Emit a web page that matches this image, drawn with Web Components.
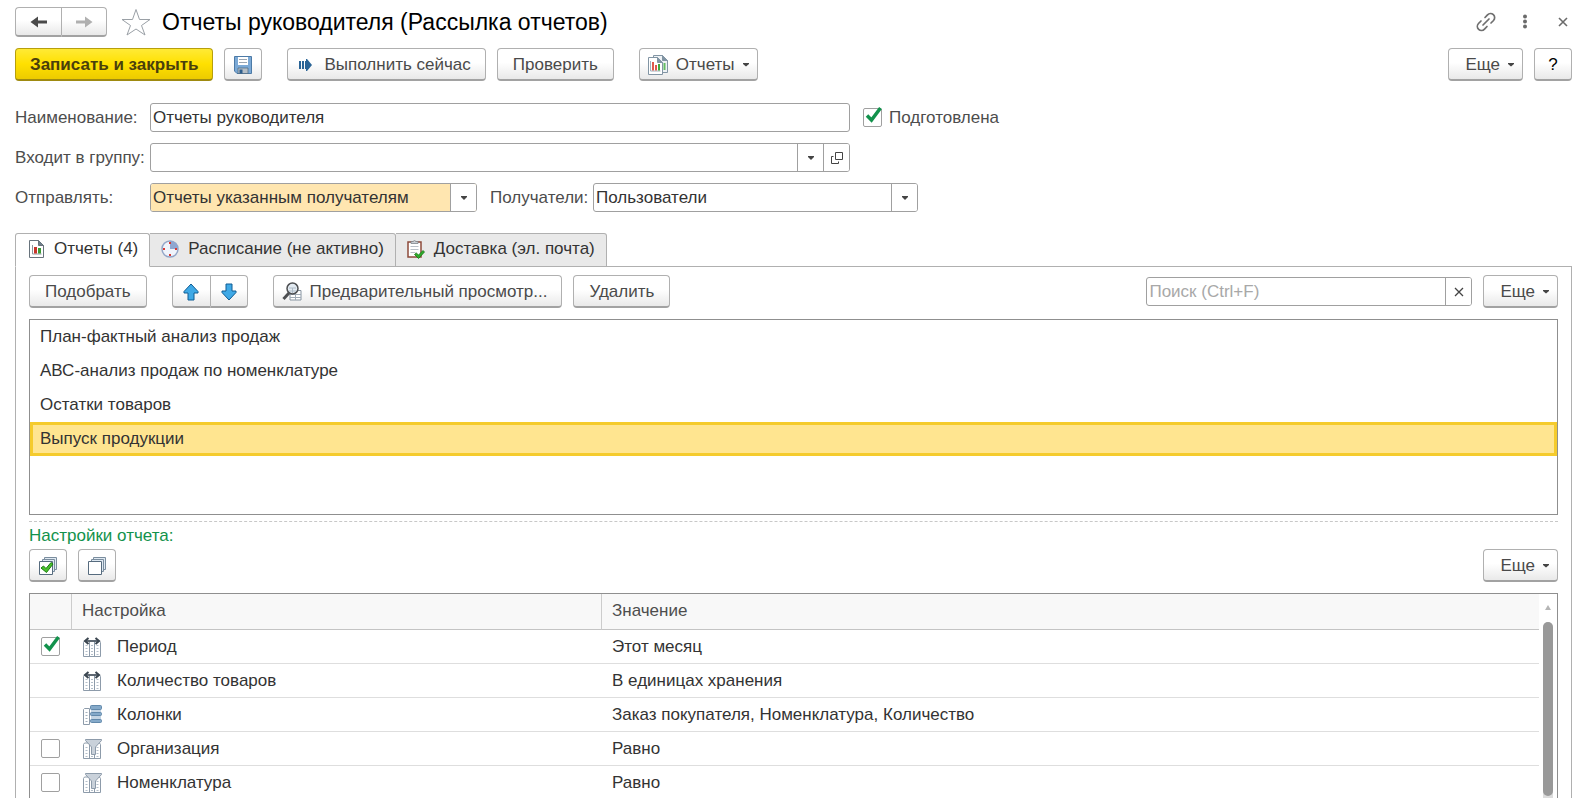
<!DOCTYPE html>
<html lang="ru">
<head>
  <meta charset="utf-8">
  <meta name="viewport" content="width=device-width, initial-scale=1">
  <title>Отчеты руководителя (Рассылка отчетов)</title>
  <style>
    :root {
      --text: #333333;
      --label: #4d4d4d;
      --line: #a0a0a0;
      --green: #12924c;
    }

    body {
      margin: 0;
      height: 100vh;
      overflow: hidden;
      background: #ffffff;
      color: var(--text);
      font: 17px/20px "Liberation Sans", Arial, sans-serif;
    }
  </style>
</head>
<body>
  <mailing-page></mailing-page>

  <script>
    const grid = `
      <path d="M.5 19.500v-14l1-1.500h15l1 1.500v14z" fill="#fff" stroke="#8d9baa"/>
      <path d="M6.500 4.500v15M11.500 4.500v15" stroke="#8d9baa"/>
      <path d="M3.500 8v10M9 8v10M14.500 8v10" stroke="#b3bec9" stroke-width="2" stroke-dasharray="1 2"/>`

    const stack = `
      <path d="M5.500 4.500v-4h12v12h-3" fill="#dfe9f2" stroke="#7a8d9e"/>
      <path d="M3.500 5.500v-3h12v12h-3" fill="#dfe9f2" stroke="#7a8d9e"/>
      <path d="M.5 4.500h13v13h-13z" fill="#fff" stroke="#566b7e"/>`

    // [width, height, markup]
    const ICONS = {
      back: [18, 12, `<path d="M.5 6L8 .5v4h9v3H8v4z" fill="#4a4a4a"/>`],
      forward: [18, 12, `<path d="M17.500 6L10 .5v4H1v3h9v4z" fill="#b0b0b0"/>`],
      star: [30, 28, `<path d="M15 1.500l3.500 10H29l-8.500 6 3.500 9.500-9-6-9 6 3.500-9.500L1 11.500h10.500z" fill="#fff" stroke="#9aa0a6"/>`],
      link: [20, 20, `<g fill="none" stroke="#6f6f6f" stroke-width="1.700" stroke-linecap="round"><path d="M7 13l6-6"/><path d="M9 5.500l2.500-2.700a4 4 0 0 1 6 5.700L15 11"/><path d="M5 9L2.500 11.500a4 4 0 0 0 6 5.700L11 14.500"/></g>`],
      dots: [14, 16, `<g fill="#6b6b6b"><circle cx="5" cy="2.500" r="2"/><circle cx="5" cy="7.500" r="2"/><circle cx="5" cy="12.500" r="2"/></g>`],
      close: [10, 10, `<path d="M1 1l8 8M9 1L1 9" fill="none" stroke="#6b6b6b" stroke-width="1.600"/>`],
      clear: [10, 10, `<path d="M1 1l8 8M9 1L1 9" fill="none" stroke="#444" stroke-width="1.300"/>`],
      caret: [6, 4, `<path d="M0 0h6v1L3 3.500 0 1z" fill="#444"/>`],
      drop: [8, 4, `<path d="M1 0h6v1L4 4 1 1z" fill="#444"/>`],
      open: [14, 14, `<path d="M5.500 1.500h7v7h-7z M3.500 5.500h-2v7h7v-2" fill="none" stroke="#444"/>`],
      save: [18, 18, `
        <path d="M.5.5h17v17H3L.5 15z" fill="#7ba9d6" stroke="#4c7aa6"/>
        <path d="M4 1h10v8H4z" fill="#fff"/>
        <path d="M5 3.500h8M5 6.500h8" stroke="#9ba6b2"/>
        <path d="M4 12h10v5.500H4z" fill="#b5bec6" stroke="#49677f" stroke-width=".7"/>
        <path d="M5.500 13.500h3v4h-3z" fill="#2f5f8d"/>`],
      run: [20, 12, `<path d="M3 2h2v8H3z M6 2h2v8H6z M9 2h1V0h1l5 6-5 6h-1v-2H9z" fill="#2a6496"/>`],
      reports: [20, 20, `
        <path d="M5.500.5h9l5 5v12h-14z" fill="#eef2f5" stroke="#8295a4"/>
        <path d="M14.500.5v5h5z" fill="#8194a3" stroke="#8295a4"/>
        <path d="M16.500 8v7" stroke="#63bd62" stroke-width="2"/>
        <path d="M.5 2.500h9l5 5v12H.5z" fill="#fff" stroke="#8295a4"/>
        <path d="M9.500 2.500v5h5z" fill="#8194a3" stroke="#8295a4"/>
        <path d="M2.500 6v10h10" fill="none" stroke="#a3b2be"/>
        <path d="M4 7h2v8.500H4z" fill="#df5a4f"/><path d="M7 10h2v5.500H7z" fill="#df5a4f"/><path d="M10 9h2v6.500h-2z" fill="#41a83f"/>`],
      up: [16, 18, `<path d="M8 1L1 8.500V10h4v7h6v-7h4V8.500z" fill="#3fa9e6" stroke="#0e5c94" stroke-linejoin="round"/>`],
      down: [16, 18, `<path d="M8 17L1 9.500V8h4V1h6v7h4v1.500z" fill="#3fa9e6" stroke="#0e5c94" stroke-linejoin="round"/>`],
      preview: [20, 19, `
        <path d="M8 8.500h11v9.500H8z" fill="#fff" stroke="#8693a0"/>
        <path d="M8 12.500h11M8 15.500h11M13.500 9v9" stroke="#a0abb6"/>
        <path d="M7 11L1.500 17" stroke="#4d4f52" stroke-width="3"/>
        <circle cx="10.500" cy="6.500" r="5.500" fill="#e3ebf2" stroke="#4d4f52" stroke-width="1.500"/>
        <path d="M7 6h7M7 9h7M10.500 6v5" stroke="#aebbc7"/>`],
      chart: [15, 18, `
        <path d="M.5.5h9l5 5v12H.5z" fill="#fff" stroke="#68737c"/>
        <path d="M9.500.5v5h5z" fill="#6f7f8c" stroke="#68737c"/>
        <path d="M3.500 5v9h9" fill="none" stroke="#8d969d"/>
        <path d="M5 7h3v6.500H5z" fill="#c8352a"/><path d="M9 8h3v5.500H9z" fill="#3c9a35"/>`],
      clock: [18, 18, `
        <circle cx="9" cy="9" r="8" fill="#f0f4fb" stroke="#93a6c8" stroke-width="1.500"/>
        <path d="M9 9V1a8 8 0 0 1 8 8z" fill="#8fa6d0"/>
        <path d="M9 2v2M9 14v2M2 9h2M14 9h2" stroke="#d83a35" stroke-width="2"/>`],
      clipboard: [18, 19, `
        <path d="M1 2h13v15H1z" fill="#fff" stroke="#8d4b3b" stroke-width="1.500"/>
        <path d="M4 3.500V1.500h2L7.500.5l1.500 1h2v2z" fill="#c9ced3" stroke="#7d858c" stroke-width=".8"/>
        <path d="M3.500 6.500h8M3.500 9.500h8M3.500 12.500h5" stroke="#b9c0c7"/>
        <path d="M7.500 14.500L9.300 13l2.200 2 4.500-4.500 1.500 1.500-6 6.500z" fill="#2fae2c" stroke="#157514" stroke-width=".8"/>`],
      checkAll: [18, 18, stack + `<path d="M2 11l2.500-2 2.500 2.500 5-6 2 1.500-6.500 8.500z" fill="#49c02c" stroke="#1b7d12"/>`],
      uncheckAll: [18, 18, stack],
      parameter: [18, 20, grid + `<path d="M2.500 4h13" stroke="#3b4650" stroke-width="1.500"/><path d="M5.500 1L2 4l3.500 3M12.500 1L16 4l-3.500 3" fill="none" stroke="#3b4650" stroke-width="2"/>`],
      columns: [19, 20, `
        <path d="M.5 19.500v-15l1-1h5v16z" fill="#fff" stroke="#8d9baa"/>
        <path d="M3.500 7v11" stroke="#a3b0bd" stroke-width="2" stroke-dasharray="1 2"/>
        <path d="M8 4h10v13H8z" fill="#c3d4e3"/>
        <rect x="7.500" y=".5" width="11" height="4" rx="1" fill="#84a9c9" stroke="#6289ab"/>
        <rect x="7.500" y="7.500" width="11" height="3" rx="1" fill="#84a9c9" stroke="#6289ab"/>
        <rect x="7.500" y="14.500" width="11" height="3" rx="1" fill="#84a9c9" stroke="#6289ab"/>`],
      filter: [19, 20, grid + `<path d="M2.500.5h16v1L12.500 8v7.500h-4V8L2.500 1.500z" fill="#c9d1da" stroke="#8d9baa"/>`]
    }

    class UiIcon extends HTMLElement {
      connectedCallback() {
        if (this.shadowRoot) return

        const [width, height, markup] = ICONS[this.getAttribute('name')]

        this.attachShadow({ mode: 'open' })
        this.shadowRoot.innerHTML = `
          <style>
            :host { display: inline-flex; flex: none; justify-content: center; }
            svg { display: block; overflow: visible; }
          </style>
          <svg width="${width}" height="${height}" viewBox="0 0 ${width} ${height}" aria-hidden="true">${markup}</svg>
        `
      }
    }

    class UiButton extends HTMLElement {
      constructor() {
        super()

        this.attachShadow({ mode: 'open' })
        this.shadowRoot.innerHTML = `
          <style>
            :host {
              display: inline-flex;
              flex: none;
            }

            button {
              display: flex;
              align-items: center;
              justify-content: center;
              gap: 8px;
              box-sizing: border-box;
              width: 100%;
              height: 33px;
              padding: 1px 15px 0;
              border: 1px solid #b0b0b0;
              border-bottom: 2px solid #a2a2a2;
              border-radius: 4px;
              background: linear-gradient(#ffffff 45%, #e9e9e9);
              color: #4a4a4a;
              font: inherit;
              white-space: nowrap;
              cursor: pointer;
            }

            :host([primary]) button {
              padding: 1px 14px 0;
              border-color: #b79f0c;
              border-bottom-color: #9f8a10;
              background: linear-gradient(#ffea35, #ffe000 50%, #eccb00);
              color: #4a3f0c;
              font-weight: bold;
            }

            :host([square]) button {
              width: 38px;
              padding: 1px 0 0;
              color: #000000;
            }

            :host([menu]) button {
              padding-left: 16px;
              padding-right: 8px;
            }

            :host([icon]) button {
              padding-left: 8px;
            }

            :host([icon]:not([menu])) button {
              padding-right: 14px;
            }

            :host([nav]) button {
              width: 46px;
              height: 30px;
              padding: 0;
            }

            :host([start]) button {
              border-right: 0;
              border-radius: 4px 0 0 4px;
            }

            :host([end]) button {
              border-radius: 0 4px 4px 0;
            }
          </style>
          <button type="button"><slot></slot></button>
        `
      }

      connectedCallback() {
        const button = this.shadowRoot.querySelector('button')

        if (this.title) button.setAttribute('aria-label', this.title)

        if (this.hasAttribute('menu')) {
          button.setAttribute('aria-haspopup', 'menu')
          button.insertAdjacentHTML('beforeend', '<ui-icon name="caret"></ui-icon>')
        }
      }
    }

    /* Labelled box. Kinds: text, select, search */
    class UiField extends HTMLElement {
      connectedCallback() {
        if (this.shadowRoot) return

        const kind = this.getAttribute('kind') || 'text'
        const label = this.getAttribute('label')
        const value = this.getAttribute('value') || ''

        const control = {
          text: `<input id="control" type="text" value="${value}">`,
          select: `
            <span class="select">
              <select id="control"><option>${value}</option></select>
              <span class="cell arrow"><ui-icon name="drop"></ui-icon></span>
            </span>`,
          search: `
            <input id="control" type="text" placeholder="${label}" aria-label="${label}">
            <button class="cell" type="button" aria-label="Очистить"><ui-icon name="clear"></ui-icon></button>`
        }[kind]

        const open = this.hasAttribute('openable')
          ? '<button class="cell" type="button" aria-label="Открыть"><ui-icon name="open"></ui-icon></button>'
          : ''

        this.attachShadow({ mode: 'open' })
        this.shadowRoot.innerHTML = `
          <style>
            :host {
              display: flex;
              align-items: center;
              min-width: 0;
            }

            label {
              flex: none;
              width: var(--label-width, auto);
              color: var(--label);
              white-space: nowrap;
            }

            .box {
              display: flex;
              flex: 1;
              box-sizing: border-box;
              min-width: 0;
              height: 29px;
              overflow: hidden;
              border: 1px solid var(--line);
              border-radius: 3px;
              background: #ffffff;
            }

            input,
            select {
              flex: 1;
              min-width: 0;
              width: 100%;
              margin: 0;
              padding: 0 2px;
              border: 0;
              outline: none;
              appearance: none;
              background: none;
              color: var(--text);
              font: inherit;
            }

            input::placeholder {
              color: #a8a8a8;
            }

            .select {
              display: grid;
              flex: 1;
              grid-template-columns: 1fr 26px;
            }

            .select select {
              grid-area: 1 / 1 / 2 / 3;
              padding-right: 28px;
            }

            .arrow {
              grid-area: 1 / 2;
              pointer-events: none;
            }

            .cell {
              display: flex;
              align-items: center;
              justify-content: center;
              box-sizing: border-box;
              width: 26px;
              padding: 0;
              border: 0;
              border-left: 1px solid var(--line);
              background: #ffffff;
            }

            :host([highlight]) select {
              background: #ffe6b0;
            }
          </style>
          ${kind === 'search' ? '' : `<label for="control">${label}</label>`}
          <span class="box">${control}${open}</span>
        `
      }
    }

    class UiCheck extends HTMLElement {
      connectedCallback() {
        if (this.shadowRoot) return

        const label = this.getAttribute('label')
        const checked = this.hasAttribute('checked') ? 'checked' : ''

        this.attachShadow({ mode: 'open' })
        this.shadowRoot.innerHTML = `
          <style>
            :host {
              display: flex;
            }

            label {
              display: flex;
              align-items: center;
              gap: 7px;
              color: var(--label);
            }

            .mark {
              display: grid;
            }

            input,
            svg {
              grid-area: 1 / 1;
            }

            input {
              width: 19px;
              height: 19px;
              margin: 0;
              border: 1px solid var(--line);
              border-radius: 2px;
              appearance: none;
              background: #ffffff;
            }

            svg {
              overflow: visible;
              visibility: hidden;
              pointer-events: none;
            }

            input:checked + svg {
              visibility: visible;
            }
          </style>
          <label>
            <span class="mark">
              <input type="checkbox" ${checked} ${this.hasAttribute('bare') ? `aria-label="${label}"` : ''}>
              <svg width="19" height="19" viewBox="0 0 19 19" aria-hidden="true">
                <path d="M4 7.500L8.500 12 17.500 0" fill="none" stroke="#12924c" stroke-width="3.500"/>
              </svg>
            </span>
            ${this.hasAttribute('bare') ? '' : `<span>${label}</span>`}
          </label>
        `
      }
    }

    class PageHeader extends HTMLElement {
      constructor() {
        super()

        this.attachShadow({ mode: 'open' })
        this.shadowRoot.innerHTML = `
          <style>
            :host {
              display: flex;
              align-items: center;
              height: 30px;
            }

            .history {
              display: flex;
              margin-right: 14px;
            }

            h1 {
              flex: 1;
              margin: 0 0 0 11px;
              color: #000000;
              font-size: 23px;
              font-weight: normal;
              line-height: 30px;
              white-space: nowrap;
            }

            .plain {
              display: flex;
              padding: 0;
              border: 0;
              background: none;
            }

            .window {
              display: flex;
              align-items: center;
              gap: 24px;
              padding-right: 4px;
            }
          </style>
          <div class="history">
            <ui-button nav start title="Назад"><ui-icon name="back"></ui-icon></ui-button>
            <ui-button nav end title="Вперед"><ui-icon name="forward"></ui-icon></ui-button>
          </div>
          <button class="plain" type="button" aria-label="В избранное"><ui-icon name="star"></ui-icon></button>
          <h1><slot></slot></h1>
          <div class="window">
            <button class="plain" type="button" aria-label="Ссылка"><ui-icon name="link"></ui-icon></button>
            <button class="plain" type="button" aria-label="Меню"><ui-icon name="dots"></ui-icon></button>
            <button class="plain" type="button" aria-label="Закрыть"><ui-icon name="close"></ui-icon></button>
          </div>
        `
      }
    }

    class ToolBar extends HTMLElement {
      constructor() {
        super()

        this.attachShadow({ mode: 'open' })
        this.shadowRoot.innerHTML = `
          <style>
            :host {
              display: flex;
              align-items: center;
              gap: 25px;
            }

            div {
              display: flex;
              align-items: center;
              gap: 11px;
            }

            .right {
              margin-left: auto;
            }
          </style>
          <slot></slot>
          <div class="right"><slot name="right"></slot></div>
        `
      }
    }

    class ButtonGroup extends HTMLElement {
      constructor() {
        super()

        this.attachShadow({ mode: 'open' })
        this.shadowRoot.innerHTML = `
          <style>
            :host { display: flex; gap: 11px; }
            :host([joined]) { gap: 0; }
          </style>
          <slot></slot>
        `
      }
    }

    class TabStrip extends HTMLElement {
      constructor() {
        super()

        const tabs = [
          ['chart', 'Отчеты (4)'],
          ['clock', 'Расписание (не активно)'],
          ['clipboard', 'Доставка (эл. почта)']
        ]

        this.attachShadow({ mode: 'open' })
        this.shadowRoot.innerHTML = `
          <style>
            :host {
              display: flex;
            }

            button {
              display: flex;
              align-items: center;
              gap: 9px;
              box-sizing: border-box;
              height: 34px;
              margin: 0;
              padding: 0 11px 2px 11px;
              border: 1px solid #b0b0b0;
              border-left-width: 0;
              border-radius: 0 3px 0 0;
              background: #e9e9e9;
              color: var(--text);
              font: inherit;
              white-space: nowrap;
            }

            button:first-of-type {
              border-left-width: 1px;
              border-radius: 3px 3px 0 0;
            }

            button[aria-selected="true"] {
              border-bottom-color: #ffffff;
              background: #ffffff;
            }

            ui-icon {
              width: 18px;
            }
          </style>
          ${tabs.map(([icon, text], i) => `<button type="button" role="tab" aria-selected="${i === 0}"><ui-icon name="${icon}"></ui-icon>${text}</button>`).join('')}
        `
        this.shadowRoot.addEventListener('click', (event) => {
          const tab = event.target.closest('button')
          if (!tab) return

          this.shadowRoot.querySelectorAll('button').forEach((item) => {
            item.setAttribute('aria-selected', item === tab)
          })
        })
      }
    }

    class ReportList extends HTMLElement {
      constructor() {
        super()

        const reports = [
          'План-фактный анализ продаж',
          'АВС-анализ продаж по номенклатуре',
          'Остатки товаров',
          'Выпуск продукции'
        ]

        this.attachShadow({ mode: 'open' })
        this.shadowRoot.innerHTML = `
          <style>
            :host {
              display: block;
              box-sizing: border-box;
              height: 196px;
              border: 1px solid #8f8f8f;
            }

            ul {
              margin: 0;
              padding: 0;
              list-style: none;
            }

            li {
              display: flex;
              align-items: center;
              box-sizing: border-box;
              height: 34px;
              padding: 0 7px;
              border: 3px solid transparent;
            }

            li[aria-selected="true"] {
              border-color: #f5cb2c;
              background: #ffe590;
            }
          </style>
          <ul role="listbox" aria-label="Отчеты">
            ${reports.map((name, i) => `<li role="option" aria-selected="${i === 3}">${name}</li>`).join('')}
          </ul>
        `
      }
    }

    class SettingsTable extends HTMLElement {
      constructor() {
        super()

        // [check state or null, icon, name, value]
        const rows = [
          [true, 'parameter', 'Период', 'Этот месяц'],
          [null, 'parameter', 'Количество товаров', 'В единицах хранения'],
          [null, 'columns', 'Колонки', 'Заказ покупателя, Номенклатура, Количество'],
          [false, 'filter', 'Организация', 'Равно'],
          [false, 'filter', 'Номенклатура', 'Равно']
        ]

        this.attachShadow({ mode: 'open' })
        this.shadowRoot.innerHTML = `
          <style>
            :host {
              display: flex;
              box-sizing: border-box;
              overflow: hidden;
              border: 1px solid #8f8f8f;
              border-bottom: 0;
            }

            table {
              flex: 1;
              width: 100%;
              height: max-content;
              border-collapse: separate;
              border-spacing: 0;
              table-layout: fixed;
            }

            .col-mark { width: 42px; }
            .col-name { width: 530px; }

            th,
            td {
              box-sizing: border-box;
              height: 34px;
              padding: 0 10px;
              border-bottom: 1px solid #dedede;
              text-align: left;
              white-space: nowrap;
            }

            td:first-child {
              padding: 0 11px;
            }

            th {
              height: 36px;
              padding-bottom: 2px;
              border-right: 1px solid #cccccc;
              border-bottom-color: #c4c4c4;
              background: #f8f8f8;
              color: var(--label);
              font-weight: normal;
            }

            th:last-child {
              border-right: 0;
            }

            .name {
              display: flex;
              align-items: center;
              gap: 15px;
            }

            .name ui-icon {
              width: 20px;
            }

            .scroll {
              display: flex;
              flex: none;
              flex-direction: column;
              align-items: center;
              width: 18px;
              padding-top: 11px;
              box-sizing: border-box;
            }

            .scroll svg {
              flex: none;
              margin-bottom: 12px;
            }

            .track {
              flex: 1;
              width: 10px;
              border-radius: 5px 5px 0 0;
              background: #dcdcdc;
            }

            .thumb {
              height: 174px;
              border-radius: 5px;
              background: #999999;
            }
          </style>
          <table>
            <colgroup><col class="col-mark"><col class="col-name"><col></colgroup>
            <thead>
              <tr><th></th><th scope="col">Настройка</th><th scope="col">Значение</th></tr>
            </thead>
            <tbody>
              ${rows.map(([checked, icon, name, value]) => `
                <tr>
                  <td>${checked === null ? '' : `<ui-check bare label="${name}" ${checked ? 'checked' : ''}></ui-check>`}</td>
                  <td><span class="name"><ui-icon name="${icon}"></ui-icon>${name}</span></td>
                  <td>${value}</td>
                </tr>`).join('')}
            </tbody>
          </table>
          <div class="scroll" aria-hidden="true">
            <svg width="6" height="5" viewBox="0 0 6 5"><path d="M3 0l3 5H0z" fill="#b5b5b5"/></svg>
            <div class="track"><div class="thumb"></div></div>
          </div>
        `
      }
    }

    class MailingPage extends HTMLElement {
      constructor() {
        super()

        this.attachShadow({ mode: 'open' })
        this.shadowRoot.innerHTML = `
          <style>
            :host {
              display: flex;
              flex-direction: column;
              box-sizing: border-box;
              height: 100%;
              padding: 7px 7px 0 15px;
            }

            .commands {
              margin-top: 11px;
            }

            form {
              display: grid;
              gap: 11px;
              margin: 22px 0 21px;
            }

            .row {
              display: flex;
              align-items: center;
              gap: 13px;
              --label-width: 135px;
            }

            .wide { flex: 0 1 835px; }
            .send { flex: 0 1 462px; }
            .to { flex: 0 1 428px; --label-width: 103px; }
            .search { flex: 0 1 326px; width: 326px; }

            tab-strip {
              position: relative;
              z-index: 1;
              margin-bottom: -1px;
            }

            .panel {
              display: flex;
              flex: 1;
              flex-direction: column;
              min-height: 0;
              padding: 8px 13px 0;
              border: 1px solid #b0b0b0;
              border-bottom: 0;
            }

            report-list {
              flex: none;
              margin: 11px 0 6px;
            }

            h2 {
              margin: 0;
              border-top: 1px dashed #c8c8c8;
              color: var(--green);
              font-size: 17px;
              font-weight: normal;
              line-height: 27px;
            }

            settings-table {
              flex: 1;
              min-height: 0;
              margin-top: 11px;
            }
          </style>
          <page-header>Отчеты руководителя (Рассылка отчетов)</page-header>

          <tool-bar class="commands">
            <button-group>
              <ui-button primary>Записать и закрыть</ui-button>
              <ui-button square title="Записать"><ui-icon name="save"></ui-icon></ui-button>
            </button-group>
            <button-group>
              <ui-button icon><ui-icon name="run"></ui-icon>Выполнить сейчас</ui-button>
              <ui-button>Проверить</ui-button>
            </button-group>
            <ui-button icon menu><ui-icon name="reports"></ui-icon>Отчеты</ui-button>
            <ui-button slot="right" menu>Еще</ui-button>
            <ui-button slot="right" square>?</ui-button>
          </tool-bar>

          <form>
            <div class="row">
              <ui-field class="wide" label="Наименование:" value="Отчеты руководителя"></ui-field>
              <ui-check label="Подготовлена" checked></ui-check>
            </div>
            <div class="row">
              <ui-field class="wide" kind="select" label="Входит в группу:" openable></ui-field>
            </div>
            <div class="row">
              <ui-field class="send" kind="select" label="Отправлять:" value="Отчеты указанным получателям" highlight></ui-field>
              <ui-field class="to" kind="select" label="Получатели:" value="Пользователи"></ui-field>
            </div>
          </form>

          <tab-strip role="tablist"></tab-strip>
          <section class="panel">
            <tool-bar>
              <ui-button>Подобрать</ui-button>
              <button-group joined>
                <ui-button square start title="Вверх"><ui-icon name="up"></ui-icon></ui-button>
                <ui-button square end title="Вниз"><ui-icon name="down"></ui-icon></ui-button>
              </button-group>
              <button-group>
                <ui-button icon><ui-icon name="preview"></ui-icon>Предварительный просмотр...</ui-button>
                <ui-button>Удалить</ui-button>
              </button-group>
              <ui-field slot="right" class="search" kind="search" label="Поиск (Ctrl+F)"></ui-field>
              <ui-button slot="right" menu>Еще</ui-button>
            </tool-bar>
            <report-list></report-list>
            <h2>Настройки отчета:</h2>
            <tool-bar>
              <button-group>
                <ui-button square title="Установить флажки"><ui-icon name="checkAll"></ui-icon></ui-button>
                <ui-button square title="Снять флажки"><ui-icon name="uncheckAll"></ui-icon></ui-button>
              </button-group>
              <ui-button slot="right" menu>Еще</ui-button>
            </tool-bar>
            <settings-table></settings-table>
          </section>
        `
      }
    }

    customElements.define('ui-icon', UiIcon)
    customElements.define('ui-button', UiButton)
    customElements.define('ui-field', UiField)
    customElements.define('ui-check', UiCheck)
    customElements.define('page-header', PageHeader)
    customElements.define('tool-bar', ToolBar)
    customElements.define('button-group', ButtonGroup)
    customElements.define('tab-strip', TabStrip)
    customElements.define('report-list', ReportList)
    customElements.define('settings-table', SettingsTable)
    customElements.define('mailing-page', MailingPage)
  </script>
</body>
</html>
